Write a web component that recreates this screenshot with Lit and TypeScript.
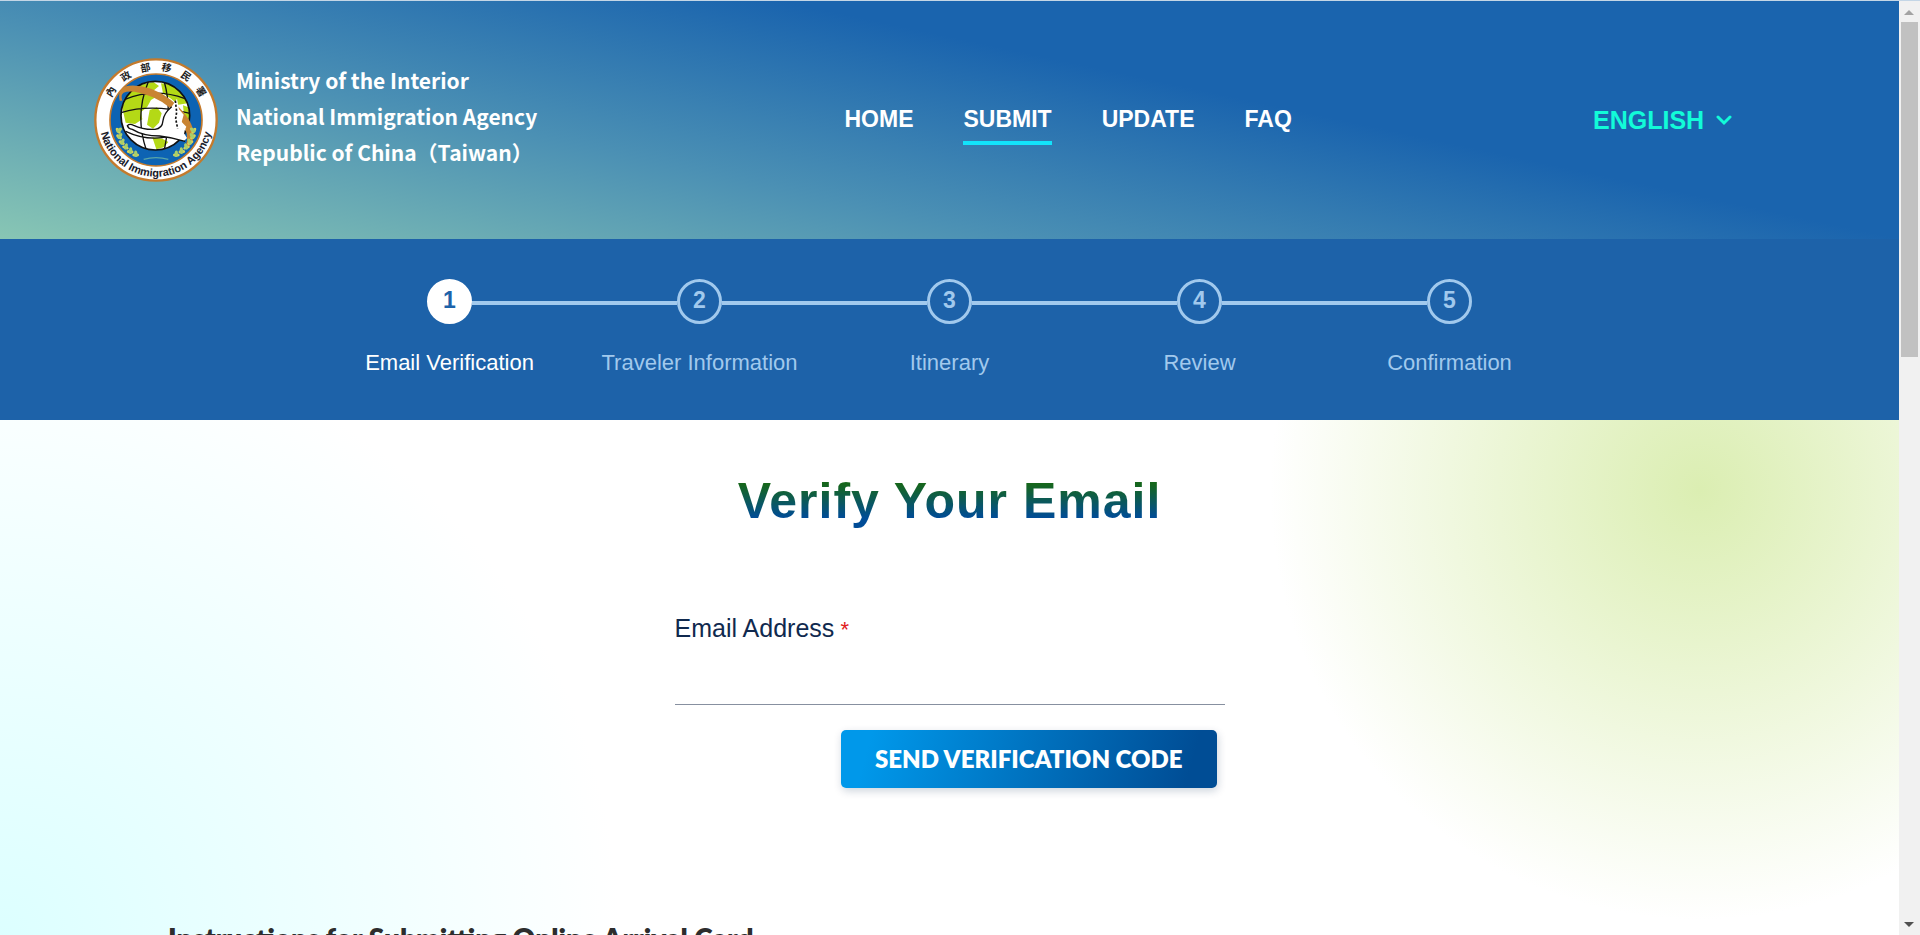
import { LitElement, html, css, svg } from "lit";
import { customElement, state } from "lit/decorators.js";
import { classMap } from "lit/directives/class-map.js";

@customElement("agency-emblem")
export class AgencyEmblem extends LitElement {
  static styles = css`
    :host { display: block; width: 124px; height: 124px; flex: none; }
    .emblem { display: block; width: 100%; height: 100%; }
    .han { font: 700 30px "Noto Sans CJK TC", sans-serif; fill: #222; }
    .latin { font: 700 33px "Liberation Sans", Arial, sans-serif; fill: #1a1a2a; }
  `;

  private leaves(flip: boolean) {
    const spots = [
      [100, 248, 20], [104, 266, 5], [113, 283, -5], [125, 297, -15],
      [140, 309, -25], [157, 318, -35],
    ];
    return spots.map(([x, y, r]) => svg`
      <g transform="translate(${flip ? 426 - x : x} ${y}) scale(${flip ? -1 : 1} 1) rotate(${r})">
        <ellipse cx="-5" cy="-3" rx="10" ry="5" transform="rotate(35)" fill="#d8d45a"/>
        <ellipse cx="7" cy="-4" rx="10" ry="5" transform="rotate(-60)" fill="#a9cf6a"/>
      </g>`);
  }

  render() {
    return html`
      <svg class="emblem" viewBox="27 24 372 372" role="img" aria-label="National Immigration Agency">
        <defs>
          <path id="upper" d="M64 210 A149 149 0 0 1 362 210"/>
          <path id="lower" d="M43 210 A170 170 0 0 0 383 210"/>
          <clipPath id="ball"><circle cx="211" cy="197" r="103"/></clipPath>
        </defs>
        <circle cx="213" cy="210" r="182" fill="#fff" stroke="#c47a2c" stroke-width="7"/>
        <circle cx="213" cy="210" r="138" fill="#0d63b3" stroke="#c47a2c" stroke-width="5"/>
        <circle cx="211" cy="197" r="103" fill="#fff"/>
        <g clip-path="url(#ball)">
          <path fill="#b4d916" d="M112 175 Q122 122 168 104 L205 96 L222 108 L205 122 L214 140 L198 150 L186 172 L168 186 L172 208 L150 222 L122 218Z"/>
          <path fill="#b4d916" d="M228 100 L262 104 L296 130 L308 160 L280 164 L258 146 L234 130Z"/>
          <path fill="#b4d916" d="M194 180 L216 172 L230 190 L222 218 L204 236 L186 224Z"/>
          <path fill="#b4d916" d="M202 262 L232 266 L250 276 L236 292 L214 298Z"/>
          <path fill="#b4d916" d="M294 166 L310 172 L314 210 L298 204Z"/>
          <g fill="none" stroke="#111" stroke-width="4">
            <path d="M190 95 Q148 195 184 300M238 96 Q262 180 238 300M120 148 Q208 112 300 146M108 188 Q200 160 315 190M122 244 Q210 286 300 242"/>
          </g>
        </g>
        <circle cx="211" cy="197" r="103" fill="none" stroke="#111" stroke-width="5"/>
        <path fill="#c98433" d="M104 152 Q96 112 132 107 Q196 102 258 150 Q318 200 326 246 Q328 272 312 290 L302 290 Q316 252 288 212 Q258 166 204 142 Q140 116 116 128 Q106 134 112 152Z"/>
        <path fill="#fff" d="M128 228 Q134 222 146 226 Q176 240 210 238 Q232 236 234 212 Q236 190 260 170 L276 146 L282 178 L296 194 L290 216 L304 230 L296 248 L306 264 L296 274 Q260 262 224 258 Q174 258 142 238Z"/>
        <path fill="none" stroke="#111" stroke-width="4" d="M260 170 Q236 190 234 212 Q232 236 210 238 Q176 240 146 226 Q134 220 127 227 Q130 236 142 238 Q174 258 224 258 Q260 262 300 274"/>
        <path d="M271 152 L275 186 L272 206 L278 236" fill="none" stroke="#111" stroke-width="5" stroke-dasharray="7 5"/>
        ${this.leaves(false)} ${this.leaves(true)}
        <path d="M176 328 Q213 318 250 328" fill="none" stroke="#5aa6a8" stroke-width="4"/>
        <text class="han" text-anchor="middle"><textPath href="#upper" startOffset="50%"><tspan>內　政　部　移　民　署</tspan></textPath></text>
        <text class="latin" text-anchor="middle"><textPath href="#lower" startOffset="50%">National Immigration Agency</textPath></text>
      </svg>`;
  }
}

@customElement("site-header")
export class SiteHeader extends LitElement {
  static styles = css`
    :host { display: block; font-family: "Liberation Sans", Arial, sans-serif; }
    .bar {
      box-sizing: border-box; min-height: 238px; padding: 0 167px 0 94px;
      display: flex; align-items: center; justify-content: space-between;
      background: linear-gradient(12deg, #88c6b4 0%, #4b90b4 34%, #1a64ae 63%);
      color: #fff;
    }
    .brand { display: flex; align-items: center; gap: 18px; color: inherit; text-decoration: none; }
    .agency { font: 700 21px/36px "Noto Sans CJK TC", "Noto Sans", sans-serif; white-space: nowrap; padding: 0 6px 8px 0; }
    .links { display: flex; gap: 50px; }
    .link {
      font-size: 23px; line-height: 26px; font-weight: 700; color: #fff; text-decoration: none;
      padding: 10px 0 9px; border-bottom: 4px solid transparent;
    }
    .current { border-bottom-color: #12e3fb; }
    .language { position: relative; color: #12fbd8; }
    .choice {
      appearance: none; border: 0; background: none; margin: 0; padding: 0 27px 0 0; color: inherit;
      font: 700 25px/30px "Liberation Sans", Arial, sans-serif; cursor: pointer;
    }
    .chevron { position: absolute; right: 0; top: 10px; width: 16px; height: 12px; pointer-events: none; }
  `;

  private items = ["HOME", "SUBMIT", "UPDATE", "FAQ"];

  render() {
    return html`
      <header class="bar">
        <a class="brand" href="#">
          <agency-emblem></agency-emblem>
          <span class="agency">Ministry of the Interior<br>National Immigration Agency<br>Republic of China（Taiwan）</span>
        </a>
        <nav class="links">
          ${this.items.map((t) => html`<a href="#" class=${classMap({ link: true, current: t === "SUBMIT" })}>${t}</a>`)}
        </nav>
        <div class="language">
          <select class="choice" aria-label="Language"><option>ENGLISH</option></select>
          <svg class="chevron" viewBox="0 0 16 12" aria-hidden="true"><path d="M2 2 L8 8 L14 2" fill="none" stroke="currentColor" stroke-width="3" stroke-linecap="round"/></svg>
        </div>
      </header>`;
  }
}

@customElement("progress-steps")
export class ProgressSteps extends LitElement {
  static styles = css`
    :host { display: block; background: #1d62a9; font-family: "Liberation Sans", Arial, sans-serif; }
    .steps {
      list-style: none; margin: 0 auto; padding: 40px 0 44px; max-width: 1250px;
      display: grid; grid-template-columns: repeat(5, 1fr);
    }
    .step { color: #a1c9ed; text-align: center; }
    .track { display: flex; align-items: center; }
    .line { flex: 1; height: 4px; margin-top: 2px; background: #a1c9ed; }
    .blank { background: none; }
    .dot {
      box-sizing: border-box; width: 45px; height: 45px; border: 3px solid #a1c9ed; border-radius: 50%;
      font-size: 23px; line-height: 36px; font-weight: 700;
    }
    .label { font-size: 22px; line-height: 26px; padding-top: 26px; white-space: nowrap; }
    .active { color: #fff; }
    .active .dot { background: #fff; border-color: #fff; color: #1d62a9; }
  `;

  private names = ["Email Verification", "Traveler Information", "Itinerary", "Review", "Confirmation"];

  render() {
    const last = this.names.length - 1;
    return html`
      <ol class="steps">
        ${this.names.map((name, i) => html`
          <li class=${classMap({ step: true, active: i === 0 })}>
            <div class="track">
              <span class=${classMap({ line: true, blank: i === 0 })}></span>
              <span class="dot">${i + 1}</span>
              <span class=${classMap({ line: true, blank: i === last })}></span>
            </div>
            <div class="label">${name}</div>
          </li>`)}
      </ol>`;
  }
}

@customElement("verify-form")
export class VerifyForm extends LitElement {
  static styles = css`
    :host { display: block; font-family: "Liberation Sans", Arial, sans-serif; }
    .title {
      width: fit-content; margin: 0 auto; padding: 53px 0 0; font-size: 50px; line-height: 56px;
      font-weight: 700; letter-spacing: 1px; color: transparent;
      background: linear-gradient(#16661c 20%, #004c97 80%) content-box; -webkit-background-clip: text; background-clip: text;
    }
    .form { display: flex; flex-direction: column; width: 550px; max-width: 100%; margin: 85px auto 0; }
    .label { font-size: 25px; line-height: 28px; color: #10294e; }
    .star { font-size: 22px; color: #e02020; }
    .email {
      height: 60px; box-sizing: border-box; border: 0; border-bottom: 1px solid #8790a0; background: none; padding: 0 8px;
      margin-top: 1px; outline: 0; font: 24px "Liberation Sans", Arial, sans-serif; color: #10294e; border-radius: 0;
    }
    .send {
      align-self: flex-end; margin: 25px 8px 0 0; height: 58px; padding: 0 34px; border: 0; border-radius: 5px;
      background: linear-gradient(105deg, #0098ea 8%, #004d95 92%); color: #fff; cursor: pointer;
      font: 800 24px/30px Lato, "Liberation Sans", sans-serif; box-shadow: 1px 3px 8px rgba(0, 40, 80, .2);
    }
  `;

  @state() private email = "";

  render() {
    return html`
      <h1 class="title">Verify Your Email</h1>
      <form class="form" @submit=${(e: Event) => e.preventDefault()}>
        <label class="label" for="email">Email Address<span class="star"> *</span></label>
        <input class="email" id="email" type="email" required .value=${this.email}
          @input=${(e: Event) => (this.email = (e.target as HTMLInputElement).value)}>
        <button class="send" type="submit">SEND VERIFICATION CODE</button>
      </form>`;
  }
}

@customElement("app-root")
export class AppRoot extends LitElement {
  static styles = css`
    :host { display: flex; box-sizing: border-box; height: 100vh; overflow: hidden; border-top: 1px solid #c4d6e6; background: #fff; }
    .page { flex: 1; min-width: 0; overflow: hidden; display: flex; flex-direction: column; }
    .main {
      flex: 1 0 auto; padding-bottom: 40px;
      background:
        radial-gradient(circle 430px at calc(100% - 199px) 70px, #dbeeb2, rgba(219, 238, 178, 0)),
        radial-gradient(circle 620px at 0 520px, #dcffff, rgba(220, 255, 255, 0)),
        #fff;
    }
    .notes { margin: 132px 168px 0; font: 800 28px/36px Lato, "Liberation Sans", sans-serif; color: #2d2d2d; }
    .scroll { flex: none; width: 21px; background: #f1f1f1; display: flex; flex-direction: column; align-items: center; }
    .arrow { flex: none; width: 21px; height: 21px; }
    .rail { flex: 1; width: 17px; }
    .thumb { height: 37.5%; background: #c1c1c1; }
  `;

  render() {
    return html`
      <div class="page">
        <site-header></site-header>
        <progress-steps></progress-steps>
        <main class="main">
          <verify-form></verify-form>
          <h2 class="notes">Instructions for Submitting Online Arrival Card</h2>
        </main>
      </div>
      <div class="scroll" aria-hidden="true">
        <svg class="arrow" viewBox="0 0 21 21"><path d="M5 14 L10 9 L15 14Z" fill="#a3a3a3"/></svg>
        <div class="rail"><div class="thumb"></div></div>
        <svg class="arrow" viewBox="0 0 21 21"><path d="M5 8 L15 8 L10 13Z" fill="#505050"/></svg>
      </div>`;
  }
}
